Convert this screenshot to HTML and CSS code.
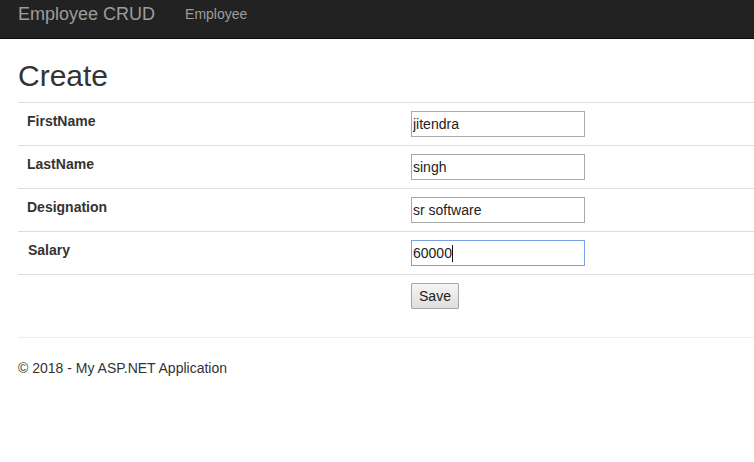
FILE: index.html
```html
<!DOCTYPE html>
<html>
<head>
<meta charset="utf-8">
<title>Create - Employee CRUD</title>
<link rel="stylesheet" href="styles.css">
</head>
<body>
<nav class="navbar">
  <a class="brand" href="#">Employee CRUD</a>
  <a class="nav-link" href="#">Employee</a>
</nav>
<div class="container">
  <h2 class="title">Create</h2>
  <table class="form-table">
    <tr>
      <td class="label-cell"><label>FirstName</label></td>
      <td class="field-cell"><input class="field" type="text" value="jitendra"></td>
    </tr>
    <tr>
      <td class="label-cell"><label>LastName</label></td>
      <td class="field-cell"><input class="field" type="text" value="singh"></td>
    </tr>
    <tr>
      <td class="label-cell"><label>Designation</label></td>
      <td class="field-cell"><input class="field" type="text" value="sr software"></td>
    </tr>
    <tr>
      <td class="label-cell"><label class="label-salary">Salary</label></td>
      <td class="field-cell"><input class="field field-focused" type="text" value="60000"><span class="caret-fake"></span></td>
    </tr>
    <tr>
      <td class="label-cell"></td>
      <td class="field-cell"><button class="btn-save" type="button">Save</button></td>
    </tr>
  </table>
  <hr class="divider">
  <footer class="footer">
    <p>&copy; 2018 - My ASP.NET Application</p>
  </footer>
</div>
</body>
</html>
```
FILE: styles.css
```css
html, body {
  margin: 0;
  padding: 0;
}
body {
  font-family: "Liberation Sans", Arial, Helvetica, sans-serif;
  font-size: 14px;
  line-height: 20px;
  color: #333;
  background: #fff;
}
.navbar {
  display: flex;
  align-items: flex-start;
  height: 38px;
  background: #222;
  border-bottom: 1px solid #080808;
  padding: 0 0 0 18px;
}
.brand {
  font-size: 18px;
  line-height: 20px;
  color: #9d9d9d;
  text-decoration: none;
  padding: 4px 15px 0 0;
}
.nav-link {
  font-size: 14px;
  line-height: 20px;
  color: #9d9d9d;
  text-decoration: none;
  padding: 4px 0 0 15px;
}
.container {
  padding: 0 0 0 18px;
}
.title {
  font-size: 30px;
  font-weight: 500;
  line-height: 33px;
  margin: 20px 0 10px;
  color: #333;
}
.form-table {
  width: 100%;
  border-collapse: collapse;
  border-spacing: 0;
  margin-bottom: 20px;
}
.form-table td {
  border-top: 1px solid #ddd;
  padding: 8px;
  vertical-align: top;
  line-height: 20px;
}
.label-cell {
  width: 368px;
  padding-left: 9px !important;
}
.label-cell label {
  font-weight: bold;
  display: inline-block;
}
.label-salary {
  padding-left: 1px;
}
.field-cell {
  position: relative;
}
.field {
  box-sizing: border-box;
  display: block;
  width: 174px;
  height: 26px;
  margin: 0;
  padding: 1px 1px;
  border: 1px solid #a9a9a9;
  font-family: "Liberation Sans", Arial, sans-serif;
  font-size: 14px;
  color: #222;
  background: #fff;
  outline: none;
}
.field-focused {
  border-color: #79a0e4;
}
.caret-fake {
  position: absolute;
  left: 49px;
  top: 13px;
  width: 1px;
  height: 17px;
  background: #111;
}
.btn-save {
  box-sizing: border-box;
  display: block;
  width: 48px;
  height: 26px;
  margin: 0;
  padding: 0;
  border: 1px solid #a6a6a6;
  border-radius: 1px;
  background: linear-gradient(#f5f5f5, #dedede);
  font-family: "Liberation Sans", Arial, sans-serif;
  font-size: 14px;
  color: #222;
}
.divider {
  margin: 0;
  border: 0;
  border-top: 1px solid #eee;
}
.footer p {
  margin: 20px 0 10px;
}
```
